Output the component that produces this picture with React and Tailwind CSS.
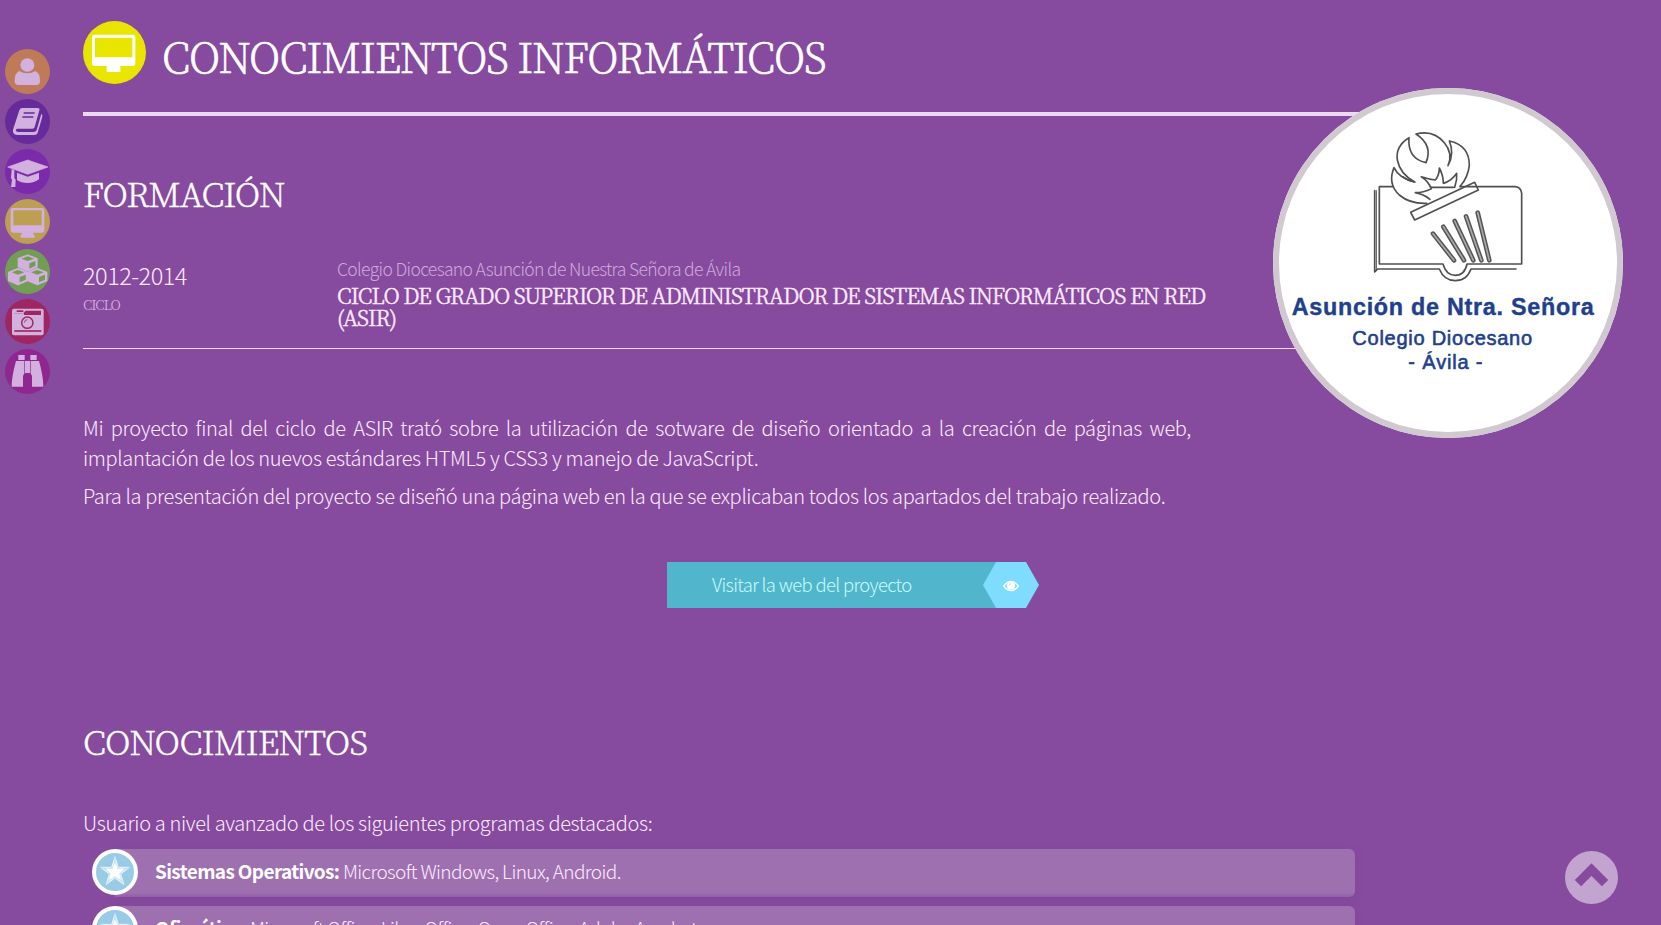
const SERIF = "font-['Noto_Serif_CJK_JP','Liberation_Serif',serif]";

function Cube({ x, y, hole }) {
  return (
    <g transform={`translate(${x} ${y})`}>
      <path d="M0 0 L28 11 V36 L0 48 L-28 36 V11Z" fill="currentColor" stroke="currentColor" strokeWidth="4" strokeLinejoin="round" />
      <path d="M0 4 L19 11 L0 18 L-19 11Z" fill={hole} />
      <path d="M5 25 L23 18 V33 L5 41Z" fill={hole} />
    </g>
  );
}

function UserIcon() {
  return (
    <g fill="currentColor">
      <ellipse cx="67" cy="48" rx="21" ry="20" />
      <path d="M43 66 Q53 73 67 73 Q81 73 91 66 Q105 72 105 96 Q105 108 94 108 H40 Q29 108 29 96 Q29 72 43 66Z" />
    </g>
  );
}

function BookIcon({ hole }) {
  return (
    <g>
      <path
        fill="currentColor"
        d="M52 27 H98 Q105 27 103 34 L89 84 Q88 89 82 89 H36 Q31 90 33 95 Q35 99 40 99 H86 Q93 99 95 93 L109 44 Q113 47 112 53 L98 101 Q96 108 88 108 H36 Q22 106 24 92 L43 34 Q45 27 52 27Z"
      />
      <path d="M56 42 H89 M52 54 H85" stroke={hole} strokeWidth="4" />
    </g>
  );
}

function GraduationIcon() {
  return (
    <g fill="currentColor">
      <path d="M8 54 L68 33 L129 54 L68 76Z" stroke="currentColor" strokeWidth="2" strokeLinejoin="round" />
      <path d="M36 71 L68 83 L102 71 V91 Q88 102 68 102 Q48 102 36 93Z" />
      <path d="M20 60 L28 63 V87 L32 92 L31 114 H18 L21 92 L18 87Z" />
    </g>
  );
}

function MonitorIcon() {
  return (
    <path
      fill="currentColor"
      fillRule="evenodd"
      d="M24 27 H111 Q118 27 118 34 V94 Q118 101 111 101 H85 V108 H89 V116 H47 V108 H50 V101 H24 Q17 101 17 94 V34 Q17 27 24 27Z M25 34 V79 H110 V34Z"
    />
  );
}

function CubesIcon({ hole }) {
  return (
    <g>
      <Cube x={68} y={18} hole={hole} />
      <Cube x={39} y={59} hole={hole} />
      <Cube x={97} y={59} hole={hole} />
    </g>
  );
}

function CameraIcon({ hole }) {
  return (
    <g>
      <rect x="21" y="29" width="95" height="80" rx="6" fill="currentColor" />
      <path d="M35 34 H55 V39 H35Z M28 43 H55 L62 35 H108 V48 H28Z" fill={hole} />
      <path d="M26 43 H57 V50 H26Z" fill="currentColor" />
      <path d="M28 96 H109" stroke={hole} strokeWidth="5" />
      <circle cx="67" cy="71" r="17" fill="none" stroke={hole} strokeWidth="4.5" />
      <path d="M58 71 Q59 62 67 62" fill="none" stroke={hole} strokeWidth="2.5" />
    </g>
  );
}

function BinocularsIcon() {
  return (
    <g fill="currentColor">
      <path d="M40 18 H59 V33 H40Z M76 18 H95 V33 H76Z" />
      <path d="M33 36 H58 V74 Q54 77 54 82 V113 H20 Q20 82 33 36Z" />
      <path d="M102 36 H77 V74 Q81 77 81 82 V113 H115 Q115 82 102 36Z" />
      <path d="M60 36 H75 V72 H60Z" />
    </g>
  );
}

const NAV = [
  { name: "perfil", Icon: UserIcon, bg: "bg-[#bf7b58]", hole: "#bf7b58" },
  { name: "libro", Icon: BookIcon, bg: "bg-[#672a9b]", hole: "#672a9b" },
  { name: "estudios", Icon: GraduationIcon, bg: "bg-[#7a2aab]", hole: "#7a2aab" },
  { name: "informatica", Icon: MonitorIcon, bg: "bg-[#bc9f52]", hole: "#bc9f52" },
  { name: "proyectos", Icon: CubesIcon, bg: "bg-[#729e53]", hole: "#729e53" },
  { name: "fotos", Icon: CameraIcon, bg: "bg-[#9e2761]", hole: "#9e2761" },
  { name: "intereses", Icon: BinocularsIcon, bg: "bg-[#902790]", hole: "#902790" },
];

function SideNav() {
  return (
    <nav className="absolute left-[5px] top-[49px] flex flex-col gap-[5px]">
      {NAV.map(({ name, Icon, bg, hole }) => (
        <a key={name} className={`block size-[45px] rounded-full text-[#d3b1df] ${bg}`}>
          <svg viewBox="0 0 135 135" className="size-full">
            <Icon hole={hole} />
          </svg>
        </a>
      ))}
    </nav>
  );
}

function SchoolBadge() {
  return (
    <div className="absolute left-[1273px] top-[88px] size-[350px] rounded-full bg-white shadow-[inset_0_0_0_6px_#d0c9cf]">
      <svg viewBox="39 24 1050 1050" className="size-full" fill="none" stroke="#505050" strokeWidth="5" strokeLinejoin="round" strokeLinecap="round">
        <path d="M400 320 H358 V552 H549 Q558 586 586 586 Q614 586 621 552 H785 V340 Q783 322 766 320 H655" />
        <path d="M344 332 V576 L353 567 H538 Q552 602 586 602 Q620 602 633 567 H768" />
        <path d="M349 332 V572" strokeWidth="3" />
        <path d="M652 320 H600 M580 322 H514" />
        <path d="M500 370 Q450 372 418 345 Q382 312 402 263 Q418 296 464 306 Q420 282 412 240 Q406 198 447 173 Q442 236 498 248 Q520 196 468 162 Q520 148 553 188 Q580 220 564 257 Q584 220 568 183 Q628 196 628 256 Q624 292 601 318" />
        <path d="M464 306 Q440 300 428 290" />
        <path d="M510 358 Q490 342 466 338 Q490 338 514 326 Q504 302 484 290 Q508 298 526 300 Q538 286 538 264 Q550 286 550 310 Q574 304 590 280 Q592 300 584 322" />
        <path d="M452 397 L644 307 L655 330 L464 420Z" />
        <path d="M519 461 L582 541 M550 440 L612 541 M584 423 L640 541 M618 409 L664 541 M653 398 L688 541" stroke="#555" strokeWidth="14" />
        <path d="M519 461 L582 541 M550 440 L612 541 M584 423 L640 541 M618 409 L664 541 M653 398 L688 541" stroke="#aaa" strokeWidth="5" />
        <g fill="#223f8c" stroke="none" className="font-['Liberation_Sans',Arial,sans-serif]">
          <text x="95" y="704" fontSize="70" fontWeight="700" textLength="906" stroke="#223f8c" strokeWidth="1.2">
            Asunción de Ntra. Señora
          </text>
          <g stroke="#223f8c" strokeWidth="1.8">
            <text x="277" y="796" fontSize="60" textLength="539">Colegio Diocesano</text>
            <text x="445" y="868" fontSize="60" textLength="222">- Ávila -</text>
          </g>
        </g>
      </svg>
    </div>
  );
}

function StarBadge() {
  return (
    <span className="z-10 size-[46px] shrink-0 rounded-full border-4 border-white bg-[#9acbe6]">
      <svg viewBox="-57 -57 114 114" className="size-full">
        <path d="M0 -46 L10 -14 H44 L17 6 L27 38 L0 18 L-27 38 L-17 6 L-44 -14 H-10Z" fill="#d3ebf6" stroke="#fff" strokeWidth="2" />
        <path d="M0 -46 V18 M44 -14 L-17 6 M27 38 L-10 -14 M-27 38 L10 -14 M-44 -14 L17 6" stroke="#a9d3ea" strokeWidth="2" />
        <path d="M0 -28 L8 -9 L27 -9 L13 4 L17 23 L0 13 L-17 23 L-13 4 L-27 -9 L-8 -9Z" fill="#fff" />
      </svg>
    </span>
  );
}

const SKILLS = [
  { label: "Sistemas Operativos:", text: "Microsoft Windows, Linux, Android." },
  { label: "Ofimática:", text: "Microsoft Office, Libre Office, Open Office, Adobe Acrobat." },
];

export default function App() {
  return (
    <div className="relative h-[925px] w-full overflow-hidden bg-[#864b9e] font-['Noto_Sans_CJK_SC','Noto_Sans',sans-serif] text-[20px] font-light leading-[30px] tracking-[-0.34px] text-[#fdeaff]">
      <SideNav />
      <main className="flex flex-col pl-[83px] pt-[21px]">
        <header className="flex h-[95px] w-[1338px] items-start gap-[16px] border-b-4 border-[#ebdaf0]">
          <span className="size-[63px] rounded-full bg-[#e9e400] text-white">
            <svg viewBox="0 0 189 189" className="size-full">
              <path
                fill="currentColor"
                fillRule="evenodd"
                d="M35 41 H149 Q157 41 157 49 V127 Q157 135 149 135 H112 V147 Q114 153 110 153 H73 Q69 153 71 147 V135 H35 Q27 135 27 127 V49 Q27 41 35 41Z M40 50 Q36 50 36 54 V109 H148 V54 Q148 50 144 50Z"
              />
            </svg>
          </span>
          <h1 className={`mt-[11px] whitespace-nowrap text-[41px] font-extralight leading-[48px] tracking-[-1.22px] text-white [-webkit-text-stroke:0.7px_white] ${SERIF}`}>
            CONOCIMIENTOS INFORMÁTICOS
          </h1>
        </header>

        <h2 className={`mt-[57px] text-[33.5px] font-extralight leading-[40px] tracking-[-1.1px] text-white [-webkit-text-stroke:0.5px_white] ${SERIF}`}>
          FORMACIÓN
        </h2>

        <section className="mt-[44px] flex h-[92px] w-[1338px] border-b border-[#f5dcf8]">
          <div className="w-[254px] pt-[4px]">
            <div className="text-[23.5px] leading-[28px] tracking-[-0.5px]">2012-2014</div>
            <div className={`mt-[5px] text-[13.5px] leading-[20px] tracking-[-1.1px] text-[#d9b8e2] ${SERIF}`}>CICLO</div>
          </div>
          <div className="w-[900px]">
            <div className="text-[17.5px] leading-[23px] tracking-[-0.64px] text-[#cfa9dc]">Colegio Diocesano Asunción de Nuestra Señora de Ávila</div>
            <h3 className={`mt-[4px] whitespace-nowrap text-[21.3px] font-light leading-[22px] tracking-[-0.97px] [-webkit-text-stroke:0.5px_#fdeaff] ${SERIF}`}>
              CICLO DE GRADO SUPERIOR DE ADMINISTRADOR DE SISTEMAS INFORMÁTICOS EN RED
              <br />
              (ASIR)
            </h3>
          </div>
        </section>

        <div className="mt-[64px] w-[1108px] text-justify">
          <p>
            Mi proyecto final del ciclo de ASIR trató sobre la utilización de sotware de diseño orientado a la creación de páginas web,
            implantación de los nuevos estándares HTML5 y CSS3 y manejo de JavaScript.
          </p>
          <p className="mt-[8px] whitespace-nowrap">
            Para la presentación del proyecto se diseñó una página web en la que se explicaban todos los apartados del trabajo realizado.
          </p>
        </div>

        <a className="ml-[584px] mt-[51px] flex h-[46px] w-[372px] items-center justify-between bg-[linear-gradient(90deg,#51b5cb_340px,transparent_340px)] pl-[45px] text-[18.5px] tracking-[-0.67px] text-[#c5fbff]">
          <span className="-mt-[3px] whitespace-nowrap">Visitar la web del proyecto</span>
          <span className="flex h-full w-[56px] items-center justify-center bg-[#80dcff] text-white [clip-path:polygon(0_50%,13px_0,43px_0,100%_50%,43px_100%,13px_100%)]">
            <svg viewBox="0 0 48 36" className="mt-[2px] h-[12px] w-[16px]">
              <path d="M2 18 Q24 -10 46 18 Q24 46 2 18Z" fill="none" stroke="currentColor" strokeWidth="4" />
              <circle cx="24" cy="17" r="12" fill="currentColor" />
              <path d="M18 17 Q18 11 24 11" fill="none" stroke="#80dcff" strokeWidth="2" />
            </svg>
          </span>
        </a>

        <h2 className={`mt-[113px] text-[33.5px] font-extralight leading-[40px] tracking-[-0.87px] text-white [-webkit-text-stroke:0.5px_white] ${SERIF}`}>
          CONOCIMIENTOS
        </h2>
        <p className="mt-[47px]">Usuario a nivel avanzado de los siguientes programas destacados:</p>

        <ul className="mt-[11px] flex w-[1272px] flex-col gap-[9px] pl-[9px]">
          {SKILLS.map((s) => (
            <li key={s.label} className="flex h-[48px] items-start">
              <StarBadge />
              <div className="-ml-[23px] h-[48px] flex-1 rounded-r-[6px] bg-[linear-gradient(180deg,#9f70b0_0,#9f70b0_43px,#935fa7_48px)] pl-[40px] text-[19px] leading-[44px] tracking-[-0.62px] shadow-[0_2px_6px_#7d449699]">
                <strong className="font-bold tracking-[-0.63px] text-white">{s.label}</strong> {s.text}
              </div>
            </li>
          ))}
        </ul>
      </main>
      <SchoolBadge />
      <a className="absolute left-[1565px] top-[851px] flex size-[53px] items-center justify-center rounded-full bg-[#c3a3d0]">
        <svg viewBox="0 0 106 74" className="-mt-[5px] h-[25px] w-[35px]">
          <path d="M12 60 L53 19 L94 60" fill="none" stroke="#864b9e" strokeWidth="27" />
        </svg>
      </a>
    </div>
  );
}
